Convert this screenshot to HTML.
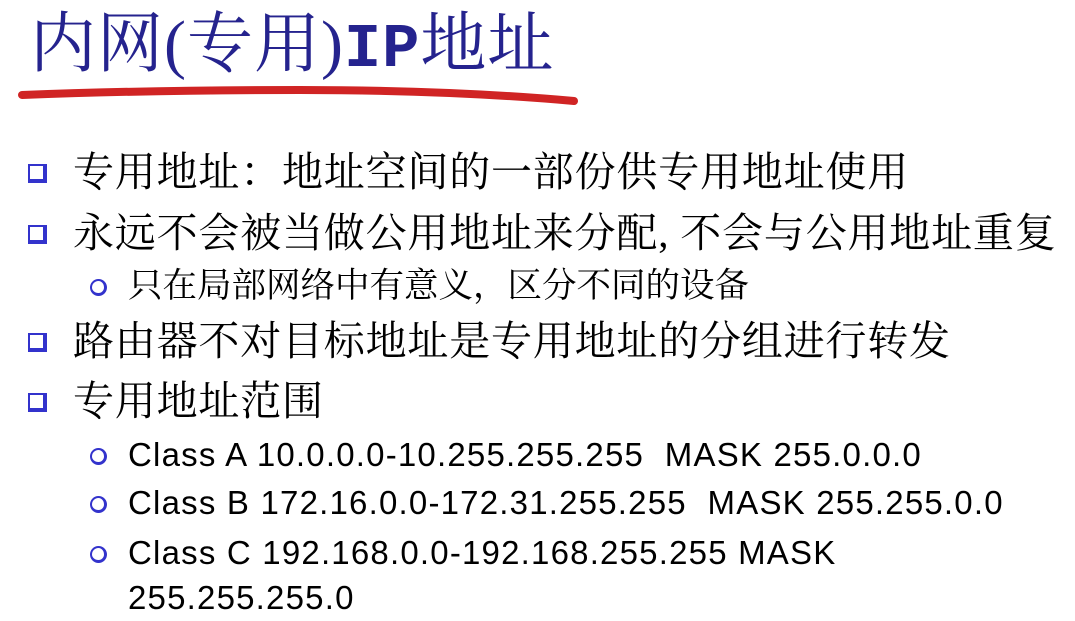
<!DOCTYPE html>
<html><head><meta charset="utf-8"><style>
body{margin:0;width:1075px;height:621px;background:#fff;position:relative;overflow:hidden;font-family:"Liberation Sans","Noto Sans CJK SC",sans-serif;}
.t{position:absolute;white-space:nowrap;line-height:1;}
.title{left:30px;top:12px;font-family:"Liberation Serif","Noto Serif CJK SC",serif;font-size:66px;color:#25238e;letter-spacing:1px;}
.title b{font-family:"Liberation Mono",monospace;font-weight:bold;font-size:62px;}
.l1{font-family:"Liberation Serif","Noto Serif CJK SC",serif;font-size:41px;letter-spacing:0.8px;color:#000;left:73px;}
.l2{font-family:"Liberation Serif","Noto Serif CJK SC",serif;font-size:34.5px;color:#000;left:128px;}
.c{font-size:33px;letter-spacing:1.2px;color:#000;left:128px;}
.sq{position:absolute;left:28px;width:13px;height:13px;border:2px solid #3333cc;border-right-width:4px;border-bottom-width:4px;background:#fff;}
.ci{position:absolute;left:90px;width:12px;height:12px;border:2px solid #3333cc;border-radius:50%;border-right-width:3px;border-bottom-width:3px;}
</style></head><body>
<div class="t title">内网(专用)<b>IP</b>地址</div>
<svg style="position:absolute;left:0;top:0" width="600" height="120"><path d="M22 95 Q150 90 300 90 Q450 90 574 101" stroke="#d02424" stroke-width="8" fill="none" stroke-linecap="round"/></svg>

<div class="sq" style="top:164px"></div>
<div class="t l1" style="top:152px">专用地址：地址空间的一部份供专用地址使用</div>
<div class="sq" style="top:225px"></div>
<div class="t l1" style="top:213px">永远不会被当做公用地址来分配, 不会与公用地址重复</div>
<div class="ci" style="top:279px"></div>
<div class="t l2" style="top:269px">只在局部网络中有意义，区分不同的设备</div>
<div class="sq" style="top:333px"></div>
<div class="t l1" style="top:321px">路由器不对目标地址是专用地址的分组进行转发</div>
<div class="sq" style="top:393px"></div>
<div class="t l1" style="top:381px">专用地址范围</div>
<div class="ci" style="top:448px"></div>
<div class="t c" style="top:438px">Class A 10.0.0.0-10.255.255.255&nbsp; MASK 255.0.0.0</div>
<div class="ci" style="top:496px"></div>
<div class="t c" style="top:486px">Class B 172.16.0.0-172.31.255.255&nbsp; MASK 255.255.0.0</div>
<div class="ci" style="top:546px"></div>
<div class="t c" style="top:536px">Class C 192.168.0.0-192.168.255.255 MASK</div>
<div class="t c" style="top:581px">255.255.255.0</div>
</body></html>
